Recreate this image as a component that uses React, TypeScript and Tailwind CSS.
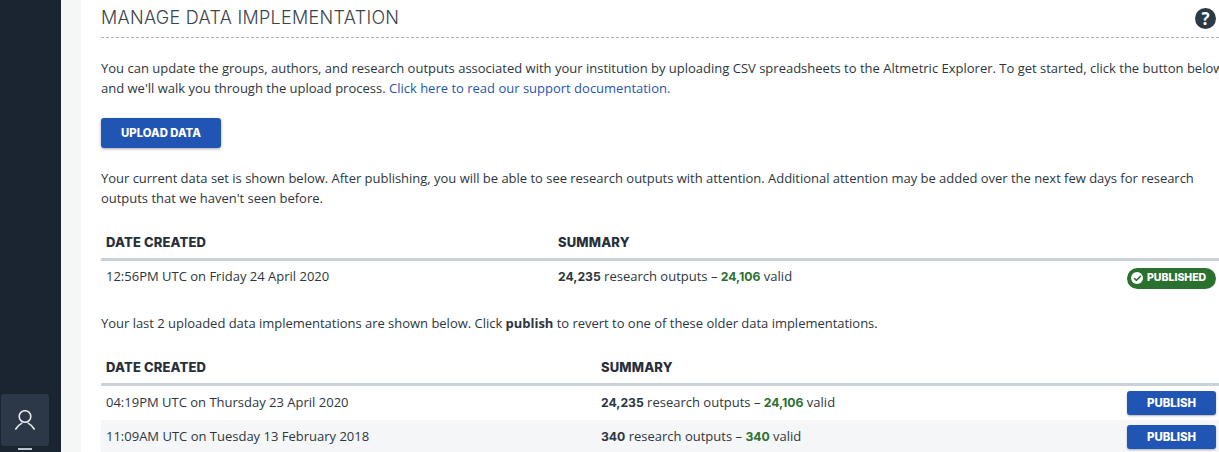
import { Check } from 'lucide-react';

const heading = "font-['Inter','Liberation_Sans',sans-serif]";

function HeadRow({ col }: { col: string }) {
  return (
    <div className={`flex h-[34px] items-center border-b-[3px] border-[#c8d2d8] text-[13px] font-extrabold tracking-[0.15px] text-[#27303a] ${heading}`}>
      <div className={`${col} pl-[5px]`}>DATE CREATED</div>
      <div className="pl-[5px]">SUMMARY</div>
    </div>
  );
}

function Summary({ total, valid }: { total: string; valid: string }) {
  return (
    <div className="pl-[5px]">
      <b className={`text-[12.2px] font-bold ${heading}`}>{total}</b> research outputs – <b className={`text-[12.2px] font-bold text-[#2a702f] ${heading}`}>{valid}</b> valid
    </div>
  );
}

function PublishButton() {
  return (
    <button className={`block h-[24px] w-[89px] rounded-[3px] bg-[#2155b3] pt-[1px] text-[11.4px] font-extrabold text-white shadow-[0_1px_2px_rgba(0,0,0,0.3)] ${heading}`}>
      PUBLISH
    </button>
  );
}

export default function App() {
  return (
    <div className="flex h-[452px] w-[1219px] overflow-hidden bg-white font-['Open_Sans',sans-serif] text-[13px] text-[#2d3640]">
      <aside className="flex w-[61px] shrink-0 flex-col items-start justify-end bg-[#1b2431] pb-[2px] pl-[1px]">
        <div className="flex h-[52px] w-[48px] items-center justify-center rounded-[3px] bg-[#2c3747]">
          <svg width="20" height="20" viewBox="0 0 20 20" fill="none" stroke="#e8ecef" strokeWidth="1.6" strokeLinecap="round">
            <circle cx="10" cy="6.5" r="5.8" />
            <path d="M0.8 19C2.5 16 4.5 14.5 6.6 13.4" />
            <path d="M19.2 19C17.5 16 15.5 14.5 13.4 13.4" />
          </svg>
        </div>
        <div className="mt-[2px] ml-[17px] h-[2px] w-[14px] bg-[#b9c3cc]" />
      </aside>
      <div className="w-[20px] shrink-0 bg-[#f5f7f7]" />
      <main className="w-[1138px] shrink-0 pl-[20px]">
        <div className="flex h-[38px] w-[1118px] items-start justify-between border-b border-dashed border-[#aab4ba] pt-[8px] pr-[3px]">
          <h1 className={`mt-[-1px] text-[18px] leading-[22px] font-light tracking-[0.3px] text-[#3b444d] ${heading}`}>MANAGE DATA IMPLEMENTATION</h1>
          <div className="flex h-[21px] w-[21px] items-center justify-center rounded-full bg-[#2b3a48] text-[17px] font-bold text-white">?</div>
        </div>
        <p className="mt-[20px] w-[1118px] overflow-hidden leading-[20px] whitespace-nowrap">
          You can update the groups, authors, and research outputs associated with your institution by uploading CSV spreadsheets to the Altmetric Explorer. To get started, click the button below
          <br />
          and we'll walk you through the upload process. <a className="text-[#1f55b5]">Click here to read our support documentation.</a>
        </p>
        <button className={`mt-[20px] block h-[30px] w-[120px] rounded-[3px] bg-[#2155b3] pt-[1px] text-[11.3px] font-extrabold text-white shadow-[0_1px_3px_rgba(0,0,0,0.35)] ${heading}`}>
          UPLOAD DATA
        </button>
        <p className="mt-[20px] w-[1116px] leading-[20px] tracking-[-0.02px]">
          Your current data set is shown below. After publishing, you will be able to see research outputs with attention. Additional attention may be added over the next few days for research outputs that we haven't seen before.
        </p>
        <div className="mt-[19px] w-[1118px]">
          <HeadRow col="w-[452px]" />
          <div className="flex h-[34px] items-center">
            <div className="mb-[2px] w-[452px] pl-[5px]">12:56PM UTC on Friday 24 April 2020</div>
            <div className="mb-[2px]"><Summary total="24,235" valid="24,106" /></div>
            <div className={`ml-auto mr-[3px] flex h-[21px] w-[89px] items-center gap-[4px] rounded-full bg-[#2a702f] pl-[4px] text-[10.5px] font-extrabold text-white ${heading}`}>
              <span className="flex h-[12px] w-[12px] items-center justify-center rounded-full bg-white">
                <Check className="h-[9px] w-[9px] text-[#2a702f]" strokeWidth={4} />
              </span>
              PUBLISHED
            </div>
          </div>
        </div>
        <p className="mt-[18px] leading-[20px] tracking-[-0.02px]">
          Your last 2 uploaded data implementations are shown below. Click <b className="font-bold">publish</b> to revert to one of these older data implementations.
        </p>
        <div className="mt-[19px] w-[1118px]">
          <HeadRow col="w-[495px]" />
          <div className="flex h-[34px] items-center">
            <div className="w-[495px] pl-[5px]">04:19PM UTC on Thursday 23 April 2020</div>
            <Summary total="24,235" valid="24,106" />
            <div className="ml-auto mr-[3px]"><PublishButton /></div>
          </div>
          <div className="flex h-[34px] items-center bg-[#f5f6f8]">
            <div className="w-[495px] pl-[5px]">11:09AM UTC on Tuesday 13 February 2018</div>
            <Summary total="340" valid="340" />
            <div className="ml-auto mr-[3px]"><PublishButton /></div>
          </div>
        </div>
      </main>
    </div>
  );
}
